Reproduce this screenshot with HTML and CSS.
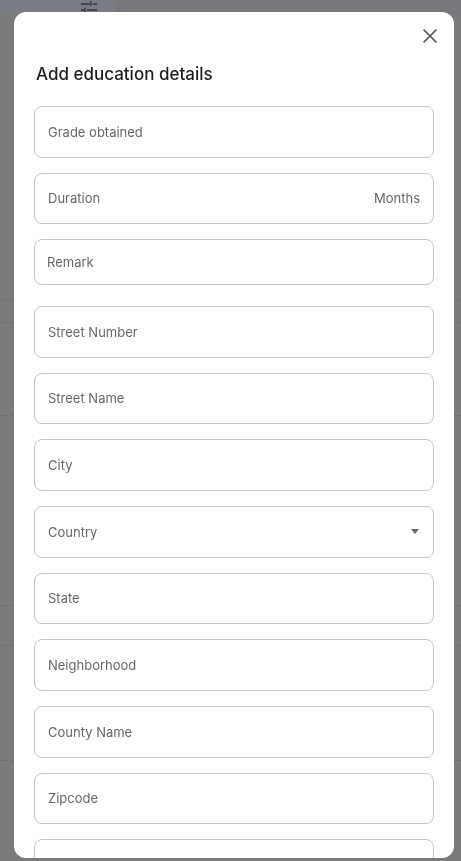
FILE: index.html
```html
<!DOCTYPE html>
<html lang="en">
<head>
<meta charset="utf-8">
<title>Add education details</title>
<link rel="stylesheet" href="styles.css">
</head>
<body>
<div class="page">
  <div class="topbar">
    <div class="topbar-left">
      <svg class="filter-icon" width="18" height="14" viewBox="0 0 18 14"><path d="M1 4h9M13 4h4M11 1v5M1 10h3M7 10h10M5 7.5v5" stroke="#34363c" stroke-width="1.3" fill="none"/></svg>
    </div>
  </div>
  <div class="bg-rows">
    <div class="bg-row r1"></div>
    <div class="bg-row r2"></div>
    <div class="bg-row r3 dashed"></div>
    <div class="bg-row r4 dashed"></div>
    <div class="bg-row r5"></div>
    <div class="bg-row r6 dashed"></div>
  </div>
</div>

<div class="modal">
  <div class="close-row">
    <button class="close-btn" aria-label="Close">
      <svg width="16" height="16" viewBox="0 0 16 16"><path d="M2 2L14 14M14 2L2 14" stroke="#555" stroke-width="1.7" stroke-linecap="round"/></svg>
    </button>
  </div>
  <h2 class="title">Add education details</h2>
  <div class="fields">
    <div class="field"><span class="label">Grade obtained</span></div>
    <div class="field"><span class="label">Duration</span><span class="suffix">Months</span></div>
    <div class="field remark"><span class="label">Remark</span></div>
    <div class="field"><span class="label">Street Number</span></div>
    <div class="field"><span class="label">Street Name</span></div>
    <div class="field"><span class="label">City</span></div>
    <div class="field"><span class="label">Country</span><span class="caret"></span></div>
    <div class="field"><span class="label">State</span></div>
    <div class="field"><span class="label">Neighborhood</span></div>
    <div class="field"><span class="label">County Name</span></div>
    <div class="field"><span class="label">Zipcode</span></div>
    <div class="field"><span class="label"></span></div>
  </div>
</div>
</body>
</html>
```
FILE: styles.css
```css
html, body {
  margin: 0;
  padding: 0;
  height: 100%;
  overflow: hidden;
}
body {
  background: #7a7a7a;
  font-family: Inter, "Noto Sans", sans-serif;
}
.page {
  display: flex;
  flex-direction: column;
}
.topbar {
  height: 14px;
  display: flex;
  background: #77787c;
}
.topbar-left {
  width: 116px;
  background: #7a7c84;
  display: flex;
  justify-content: flex-end;
  padding-right: 18px;
  box-sizing: border-box;
}
.bg-rows {
  display: flex;
  flex-direction: column;
}
.bg-row {
  border-bottom: 1px solid #727272;
}
.bg-row.dashed {
  border-bottom: 1px dashed #6c6c6c;
}
.r1 { height: 286px; }
.r2 { height: 21px; }
.r3 { height: 92px; }
.r4 { height: 189px; }
.r5 { height: 39px; }
.r6 { height: 114px; }

.modal {
  position: fixed;
  left: 14px;
  top: 12px;
  width: 440px;
  height: 846px;
  background: #fff;
  border-radius: 12px;
  overflow: hidden;
  padding: 0 20px;
  box-sizing: border-box;
}
.close-row {
  display: flex;
  justify-content: flex-end;
  margin-top: 13px;
  margin-right: -7px;
}
.close-btn {
  width: 22px;
  height: 22px;
  padding: 0;
  border: 0;
  background: none;
  display: flex;
  align-items: center;
  justify-content: center;
}
.title {
  margin: 15px 0 0 2px;
  font-size: 17px;
  font-weight: 500;
  line-height: 24px;
  color: #1e1e1e;
}
.fields {
  display: flex;
  flex-direction: column;
  margin-top: 20px;
}
.field {
  height: 51.67px;
  margin-bottom: 15px;
  flex-shrink: 0;
  box-sizing: border-box;
  border: 1px solid #c6c6c6;
  border-radius: 8px;
  padding: 0 13px;
  display: flex;
  align-items: center;
  justify-content: space-between;
  font-size: 13px;
  color: #686868;
}
.field.remark {
  height: 45.67px;
  margin-bottom: 21px;
  padding-left: 12px;
}
.suffix {
  color: #686868;
}
.caret {
  width: 0;
  height: 0;
  border-left: 4.5px solid transparent;
  border-right: 4.5px solid transparent;
  border-top: 5px solid #666;
  margin-right: 1px;
}
```
